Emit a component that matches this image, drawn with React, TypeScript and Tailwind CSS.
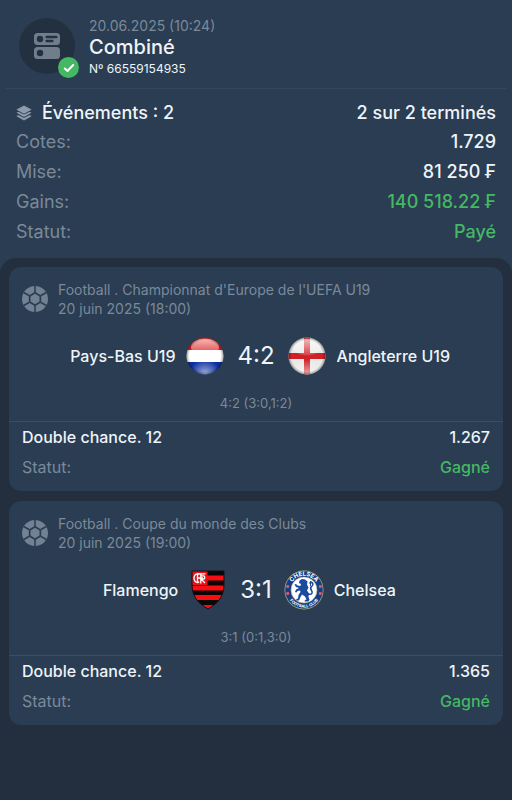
import { useId } from "react";
import type { ReactNode } from "react";
import { clsx } from "clsx";

interface Match {
    league: string;
    date: string;
    home: string;
    away: string;
    homeLogo: ReactNode;
    awayLogo: ReactNode;
    score: string;
    periods: string;
    pick: string;
    odds: string;
    status: string;
}

function CouponIcon() {
    return (
        <svg viewBox="0 0 26 26" className="w-[26px] h-[26px]">
            <rect x="0" y="0" width="26" height="12" rx="3.5" fill="#707d8d" />
            <rect x="0" y="14" width="26" height="12" rx="3.5" fill="#707d8d" />
            <circle cx="6" cy="6" r="3.2" fill="#233040" />
            <circle cx="6" cy="20" r="3.2" fill="#233040" />
            <rect x="11.5" y="2.8" width="12" height="2.4" rx="1" fill="#233040" />
            <rect x="11.5" y="6.8" width="8" height="2.4" rx="1" fill="#233040" />
        </svg>
    );
}

function LayersIcon() {
    return (
        <svg viewBox="0 0 16 16" className="w-4 h-4" fill="#8e9baa">
            <path d="M8 0.6 15 4.2a.5.5 0 0 1 0 .9L8 8.8 1 5.1a.5.5 0 0 1 0-.9Z" />
            <path d="M1 7.2 2.8 6.9 8 9.6l5.2-2.7 1.8.3a.5.5 0 0 1 0 .9L8 12 1 8.1a.5.5 0 0 1 0-.9Z" />
            <path d="M1 10.6 2.8 10.3 8 13l5.2-2.7 1.8.3a.5.5 0 0 1 0 .9L8 15.4 1 11.5a.5.5 0 0 1 0-.9Z" />
        </svg>
    );
}

function BallIcon() {
    return (
        <svg viewBox="0 0 26 26" className="w-[26px] h-[26px] shrink-0">
            <circle cx="13" cy="13" r="13" fill="#728194" />
            <path
                d="M13 0v6M13 20v6M1.7 6.5 7 9.5M24.3 6.5 19 9.5M1.7 19.5 7 16.5M24.3 19.5 19 16.5"
                stroke="#2a3d52"
                strokeWidth="1.5"
            />
            <path d="M13 5.8 6.8 9.4v7.2l6.2 3.6 6.2-3.6V9.4Z" fill="#2a3d52" />
            <path d="M13 7.8 8.5 10.4v5.2l4.5 2.6 4.5-2.6v-5.2Z" fill="#728194" />
        </svg>
    );
}

function RoundFlag({ children }: { children: ReactNode }) {
    const id = useId();
    return (
        <svg viewBox="0 0 38 38" className="w-[38px] h-[38px]">
            <defs>
                <clipPath id={`${id}-clip`}>
                    <circle cx="19" cy="19" r="18.5" />
                </clipPath>
                <radialGradient id={`${id}-rim`} cx="0.5" cy="0.5" r="0.5">
                    <stop offset="0.82" stopColor="#000" stopOpacity="0" />
                    <stop offset="1" stopColor="#000" stopOpacity="0.4" />
                </radialGradient>
                <linearGradient id={`${id}-gloss`} x1="0" y1="0" x2="0" y2="1">
                    <stop offset="0" stopColor="#fff" stopOpacity="0.7" />
                    <stop offset="1" stopColor="#fff" stopOpacity="0.15" />
                </linearGradient>
                <radialGradient id={`${id}-glow`} cx="0.5" cy="1" r="0.42">
                    <stop offset="0" stopColor="#fff" stopOpacity="0.65" />
                    <stop offset="1" stopColor="#fff" stopOpacity="0" />
                </radialGradient>
            </defs>
            <g clipPath={`url(#${id}-clip)`}>
                {children}
                <ellipse cx="19" cy="10" rx="14" ry="8.5" fill={`url(#${id}-gloss)`} />
                <rect width="38" height="38" fill={`url(#${id}-glow)`} />
                <rect width="38" height="38" fill={`url(#${id}-rim)`} />
            </g>
        </svg>
    );
}

function NetherlandsFlag() {
    return (
        <RoundFlag>
            <rect width="38" height="13" fill="#dc1c1c" />
            <rect y="13" width="38" height="12" fill="#fff" />
            <rect y="25" width="38" height="13" fill="#0c2fa0" />
        </RoundFlag>
    );
}

function EnglandFlag() {
    return (
        <RoundFlag>
            <rect width="38" height="38" fill="#e9e9e7" />
            <rect x="16" width="6" height="38" fill="#cf2027" />
            <rect y="16" width="38" height="6" fill="#cf2027" />
        </RoundFlag>
    );
}

function FlamengoCrest() {
    const id = useId();
    return (
        <svg viewBox="0 0 34 40" className="w-[34px] h-10">
            <clipPath id={id}>
                <path d="M1 1h32v13c0 13-6 19-16 25C7 33 1 27 1 14Z" />
            </clipPath>
            <g clipPath={`url(#${id})`}>
                <rect width="34" height="40" fill="#0c0506" />
                <rect y="5.5" width="34" height="5" fill="#f80d12" />
                <rect y="15.5" width="34" height="5" fill="#f80d12" />
                <rect y="25" width="34" height="5" fill="#f80d12" />
                <rect y="35" width="34" height="5" fill="#f80d12" />
                <rect width="16.5" height="15" fill="#e8141a" />
            </g>
            <g fill="none" stroke="#fff" strokeWidth="1.3">
                <path d="M8.5 4.2C4.5 3.2 3 5.6 3 8.2s1.6 4.8 5.2 3.8" />
                <path d="M6.5 3.2v10M6.5 3.8h8M6.5 8h5.5" />
                <path d="M9.8 3.6v9.8M9.8 5.8h2.4c2.2 0 2.2 3.2 0 3.2H10l4 4" />
            </g>
            <path d="M1 1h32v13c0 13-6 19-16 25C7 33 1 27 1 14Z" fill="none" stroke="#151015" strokeWidth="1" />
        </svg>
    );
}

function ChelseaCrest() {
    const id = useId();
    return (
        <svg viewBox="0 0 40 40" className="w-10 h-10">
            <defs>
                <path id={`${id}-top`} d="M5.8 20a14.2 14.2 0 0 1 28.4 0" />
                <path id={`${id}-bottom`} d="M2.4 20a17.6 17.6 0 0 0 35.2 0" />
            </defs>
            <circle cx="20" cy="20" r="19.5" fill="#b9b27a" />
            <circle cx="20" cy="20" r="18.8" fill="#123f86" />
            <circle cx="20" cy="20" r="13" fill="#fff" stroke="#b9b27a" strokeWidth="0.6" />
            <text fill="#fff" fontSize="6" fontWeight="700" fontFamily="Inter, sans-serif" textAnchor="middle">
                <textPath href={`#${id}-top`} startOffset="50%">CHELSEA</textPath>
            </text>
            <text fill="#fff" fontSize="4" fontWeight="700" fontFamily="Inter, sans-serif" textAnchor="middle">
                <textPath href={`#${id}-bottom`} startOffset="50%">FOOTBALL CLUB</textPath>
            </text>
            <g fill="#d9566c">
                <rect x="2.2" y="15" width="3" height="3" rx="1" />
                <rect x="2.2" y="22" width="3" height="3" rx="1" />
                <rect x="34.8" y="15" width="3" height="3" rx="1" />
                <rect x="34.8" y="22" width="3" height="3" rx="1" />
            </g>
            <path
                d="M15.5 10.5 18 9l3 .5 2.5 2-.5 3 1.5 3-1.5 3 2 3-.5 3.5 1 2.5-1 2h-4l.5-1.5 1.5-.5-1.5-3-3-2-1.5 2.5-1.5 3.500h-3l.5-1.500 1.500-.5.5-3.500 2-3-.5-1.500-2.500.5-1 1.500-1.500-.5 1-2.500 3-1.500-3-1-1.500-2.500 1.500-.5 1.500 1.500 3 .5.5-2-2-1Z"
                fill="#1a4b9d"
            />
            <g fill="none" stroke="#1a4b9d" strokeLinecap="round" strokeLinejoin="round">
                <path d="M24.5 24c3.5 1 4.5-1.5 3-3.5s-1.5-3 .5-4.5c1.5-1.2 1-3-.5-4" strokeWidth="1.5" />
                <path d="M26.5 16v-4.5M25.3 13h3" strokeWidth="1" />
            </g>
        </svg>
    );
}

const matches: Match[] = [
    {
        league: "Football . Championnat d'Europe de l'UEFA U19",
        date: "20 juin 2025 (18:00)",
        home: "Pays-Bas U19",
        away: "Angleterre U19",
        homeLogo: <NetherlandsFlag />,
        awayLogo: <EnglandFlag />,
        score: "4:2",
        periods: "4:2 (3:0,1:2)",
        pick: "Double chance. 12",
        odds: "1.267",
        status: "Gagné",
    },
    {
        league: "Football . Coupe du monde des Clubs",
        date: "20 juin 2025 (19:00)",
        home: "Flamengo",
        away: "Chelsea",
        homeLogo: <FlamengoCrest />,
        awayLogo: <ChelseaCrest />,
        score: "3:1",
        periods: "3:1 (0:1,3:0)",
        pick: "Double chance. 12",
        odds: "1.365",
        status: "Gagné",
    },
];

const totals = [
    { label: "Cotes:", value: "1.729", won: false },
    { label: "Mise:", value: "81 250 ₣", won: false },
    { label: "Gains:", value: "140 518.22 ₣", won: true },
    { label: "Statut:", value: "Payé", won: true },
];

function MatchCard({ match }: { match: Match }) {
    return (
        <article className="rounded-xl bg-[#2a3d52]">
            <div className="flex items-center gap-2.5 px-[13px] pt-[13px]">
                <BallIcon />
                <div className="text-sm leading-[19px] text-[#7b899a]">
                    <p>{match.league}</p>
                    <p>{match.date}</p>
                </div>
            </div>
            <div className="mt-4 grid grid-cols-[1fr_auto_1fr] items-center h-11 text-base font-medium text-[#eef4fa]">
                <div className="flex items-center justify-end gap-2.5">
                    <span>{match.home}</span>
                    <span className="flex w-10 justify-center">{match.homeLogo}</span>
                </div>
                <span className="px-3 text-center text-2xl font-normal">{match.score}</span>
                <div className="flex items-center gap-2.5">
                    <span className="flex w-10 justify-center">{match.awayLogo}</span>
                    <span>{match.away}</span>
                </div>
            </div>
            <p className="mt-4 pb-2 text-center text-[13px] leading-[19px] text-[#7b899a]">{match.periods}</p>
            <dl className="border-t border-[#3b4e63] px-[13px] pb-[9px] text-base leading-[30px]">
                <div className="flex justify-between font-medium text-[#eef4fa]">
                    <dt>{match.pick}</dt>
                    <dd>{match.odds}</dd>
                </div>
                <div className="flex justify-between">
                    <dt className="text-[#7b899a]">Statut:</dt>
                    <dd className="font-medium text-[#45b864]">{match.status}</dd>
                </div>
            </dl>
        </article>
    );
}

export default function App() {
    return (
        <div className="flex min-h-screen flex-col bg-[#2a3d52] font-['Inter','Liberation_Sans',sans-serif]">
            <header className="mx-1.5 flex items-start gap-3.5 border-b border-[#34475c] px-[13px] pt-4 pb-2">
                <div className="relative mt-0.5 flex h-14 w-14 items-center justify-center rounded-full bg-[#233040]">
                    <CouponIcon />
                    <span className="absolute -right-1 -bottom-1 flex h-[21px] w-[21px] items-center justify-center rounded-full bg-[#45b864]">
                        <svg viewBox="0 0 12 12" className="h-3 w-3" fill="none" stroke="#fff" strokeWidth="2" strokeLinecap="round" strokeLinejoin="round">
                            <path d="m1.8 6.5 2.7 2.5 5.7-6" />
                        </svg>
                    </span>
                </div>
                <div>
                    <p className="text-sm leading-5 text-[#7b899a]">20.06.2025 (10:24)</p>
                    <h1 className="text-xl leading-[22px] font-medium text-[#eef4fa]">Combiné</h1>
                    <p className="text-xs leading-[22px] text-[#eef4fa]">Nº 66559154935</p>
                </div>
            </header>

            <section className="px-4 pt-2.5 pb-[11px] text-lg leading-[30px]">
                <div className="flex items-center justify-between leading-7 font-medium text-[#eef4fa]">
                    <h2 className="flex items-center gap-2.5">
                        <LayersIcon />
                        Événements : 2
                    </h2>
                    <span>2 sur 2 terminés</span>
                </div>
                <dl>
                    {totals.map((row) => (
                        <div key={row.label} className="flex justify-between">
                            <dt className="text-[#7b899a]">{row.label}</dt>
                            <dd className={clsx("font-medium", row.won ? "text-[#45b864]" : "text-[#eef4fa]")}>{row.value}</dd>
                        </div>
                    ))}
                </dl>
            </section>

            <main className="flex flex-1 flex-col gap-2.5 rounded-t-2xl bg-[#232f3e] px-[9px] pt-[9px] pb-6">
                {matches.map((match) => (
                    <MatchCard key={match.home} match={match} />
                ))}
            </main>
        </div>
    );
}
